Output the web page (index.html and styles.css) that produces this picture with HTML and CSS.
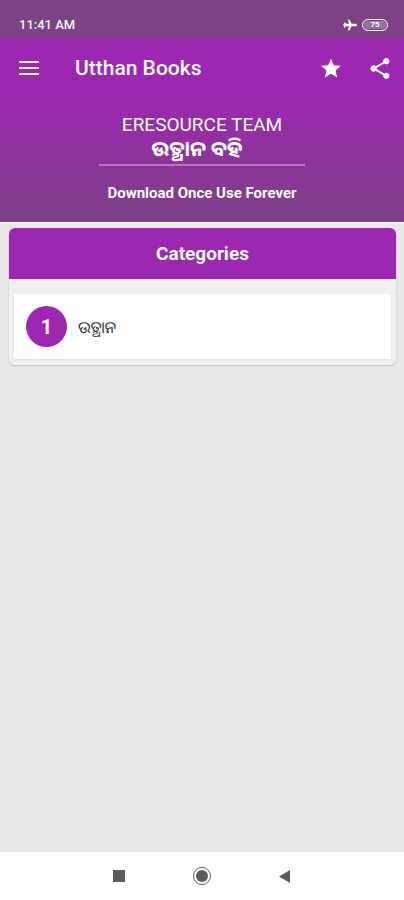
FILE: index.html
```html
<!DOCTYPE html>
<html lang="en">
<head>
<meta charset="utf-8">
<meta name="viewport" content="width=device-width, initial-scale=1">
<title>Utthan Books</title>
<link rel="stylesheet" href="styles.css">
</head>
<body>
<div class="status">
  <span class="time">11:41 AM</span>
  <svg class="plane" viewBox="0 0 24 24" aria-hidden="true"><path d="M24 12c0-1.200-.8-2-2-2H15L11 2.500H8.500l1.800 7.500H5L3.500 7.500h-2L2.500 10.500 0 11v2l2.500.5-1 3h2L5 14h5.300l-1.800 7.500H11L15 14h7c1.200 0 2-.8 2-2z"/></svg>
  <span class="battery">75</span>
</div>
<header class="bar">
  <button class="icon" aria-label="Menu"><svg viewBox="0 0 20 14"><path d="M0 0h20v2H0zM0 6h20v2H0zM0 12h20v2H0z"/></svg></button>
  <h1>Utthan Books</h1>
  <button class="icon" aria-label="Favourites"><svg viewBox="2 2 20 20"><path d="M12 17.270 18.180 21l-1.640-7.030L22 9.240l-7.190-.61L12 2 9.190 8.630 2 9.240l5.460 4.730L5.820 21z"/></svg></button>
  <button class="icon" aria-label="Share"><svg viewBox="3 2 18 20"><path d="M18 16.080c-.76 0-1.440.3-1.960.77L8.910 12.700c.05-.23.09-.46.09-.7s-.04-.47-.09-.7l7.050-4.110c.54.5 1.250.81 2.040.81 1.660 0 3-1.340 3-3s-1.340-3-3-3-3 1.340-3 3c0 .24.04.47.09.7L8.040 9.810C7.500 9.310 6.790 9 6 9c-1.660 0-3 1.340-3 3s1.340 3 3 3c.79 0 1.500-.31 2.040-.81l7.120 4.160c-.05.21-.08.43-.08.65 0 1.610 1.310 2.920 2.920 2.920s2.920-1.310 2.920-2.920-1.310-2.920-2.920-2.920z"/></svg></button>
</header>
<section class="hero">
  <p class="team">ERESOURCE TEAM</p>
  <h2 lang="or">ଉତ୍ଥାନ ବହି</h2>
  <hr>
  <p class="tagline">Download Once Use Forever</p>
</section>
<main>
  <section class="card">
    <h2>Categories</h2>
    <a class="item" href="#"><span class="number">1</span><span lang="or">ଉତ୍ଥାନ</span></a>
  </section>
</main>
<nav class="nav">
  <button aria-label="Recent apps"><svg viewBox="0 0 20 20"><path d="M4 4h12v12H4z"/></svg></button>
  <button aria-label="Home"><svg viewBox="0 0 20 20"><circle cx="10" cy="10" r="6"/><circle class="ring" cx="10" cy="10" r="8.500"/></svg></button>
  <button aria-label="Back"><svg viewBox="0 0 20 20"><path d="M15 4v13L4 10.500z"/></svg></button>
</nav>
</body>
</html>
```
FILE: styles.css
```css
* { box-sizing: border-box; }
body {
  margin: 0;
  min-height: 100vh;
  display: flex;
  flex-direction: column;
  background: #e8e8e8;
  color: #fff;
  font-family: Roboto, "Noto Sans Oriya", "Noto Sans", sans-serif;
}
h1, h2, p { margin: 0; }
button { padding: 0; border: 0; background: none; color: inherit; }
svg { display: block; fill: currentColor; }

.status {
  display: flex;
  align-items: center;
  gap: 5px;
  height: 39px;
  padding: 10px 16px 0 19px;
  background: #7d4186;
}
.time { flex: 1; font-size: 13px; font-weight: 500; }
.plane { width: 14px; height: 14px; }
.battery {
  width: 26px;
  height: 12px;
  border: 1px solid #fff;
  border-radius: 6px;
  background: #9a70a1;
  box-shadow: inset 0 0 0 1px #7d4186;
  font-size: 8px;
  font-weight: 700;
  line-height: 10px;
  text-align: center;
}

.bar {
  display: flex;
  align-items: center;
  height: 58px;
  padding: 0 14px 0 19px;
  background: #9c27b0;
}
.bar h1 { flex: 1; margin-left: 36px; font-size: 21px; font-weight: 500; }
.icon svg { width: 20px; height: 14px; }
.icon + .icon { margin-left: 29px; }
h1 ~ .icon svg { height: 21px; }

.hero {
  height: 125px;
  padding: 16px 0 0;
  background: linear-gradient(#9c27b0, #7d4186);
  text-align: center;
}
.team { font-size: 19px; line-height: 24px; }
.hero h2 { padding-right: 10px; font-size: 21px; line-height: 24px; }
.hero hr { width: 51%; height: 2px; margin: 3px auto 0; border: 0; background: #b577c0; }
.tagline { padding-top: 18px; font-size: 15px; font-weight: 700; line-height: 18px; }

main { flex: 1; padding: 5px 8px 6px 9px; border-top: 1px solid #fff; }
.card {
  padding-bottom: 6px;
  border-radius: 6px;
  background: #f0f0f0;
  box-shadow: 0 1px 2px #bbb;
}
.card h2 {
  margin-bottom: 15px;
  border-radius: 6px 6px 0 0;
  background: #9c27b0;
  font-size: 19px;
  font-weight: 700;
  line-height: 51px;
  text-align: center;
}
.item {
  display: flex;
  align-items: center;
  gap: 11px;
  height: 65px;
  margin: 0 5px;
  padding-left: 12px;
  background: #fff;
  box-shadow: 0 1px 2px #ddd;
  color: #333;
  font-size: 16px;
  text-decoration: none;
}
.number {
  width: 41px;
  height: 41px;
  border-radius: 50%;
  background: #9c27b0;
  color: #fff;
  font-size: 20px;
  font-weight: 700;
  line-height: 42px;
  text-align: center;
}

.nav {
  display: flex;
  justify-content: center;
  gap: 63px;
  height: 48px;
  background: #fff;
  color: #5c5c5c;
}
.nav svg { width: 20px; height: 20px; }
.ring { fill: none; stroke: currentColor; stroke-width: 1; }
```
